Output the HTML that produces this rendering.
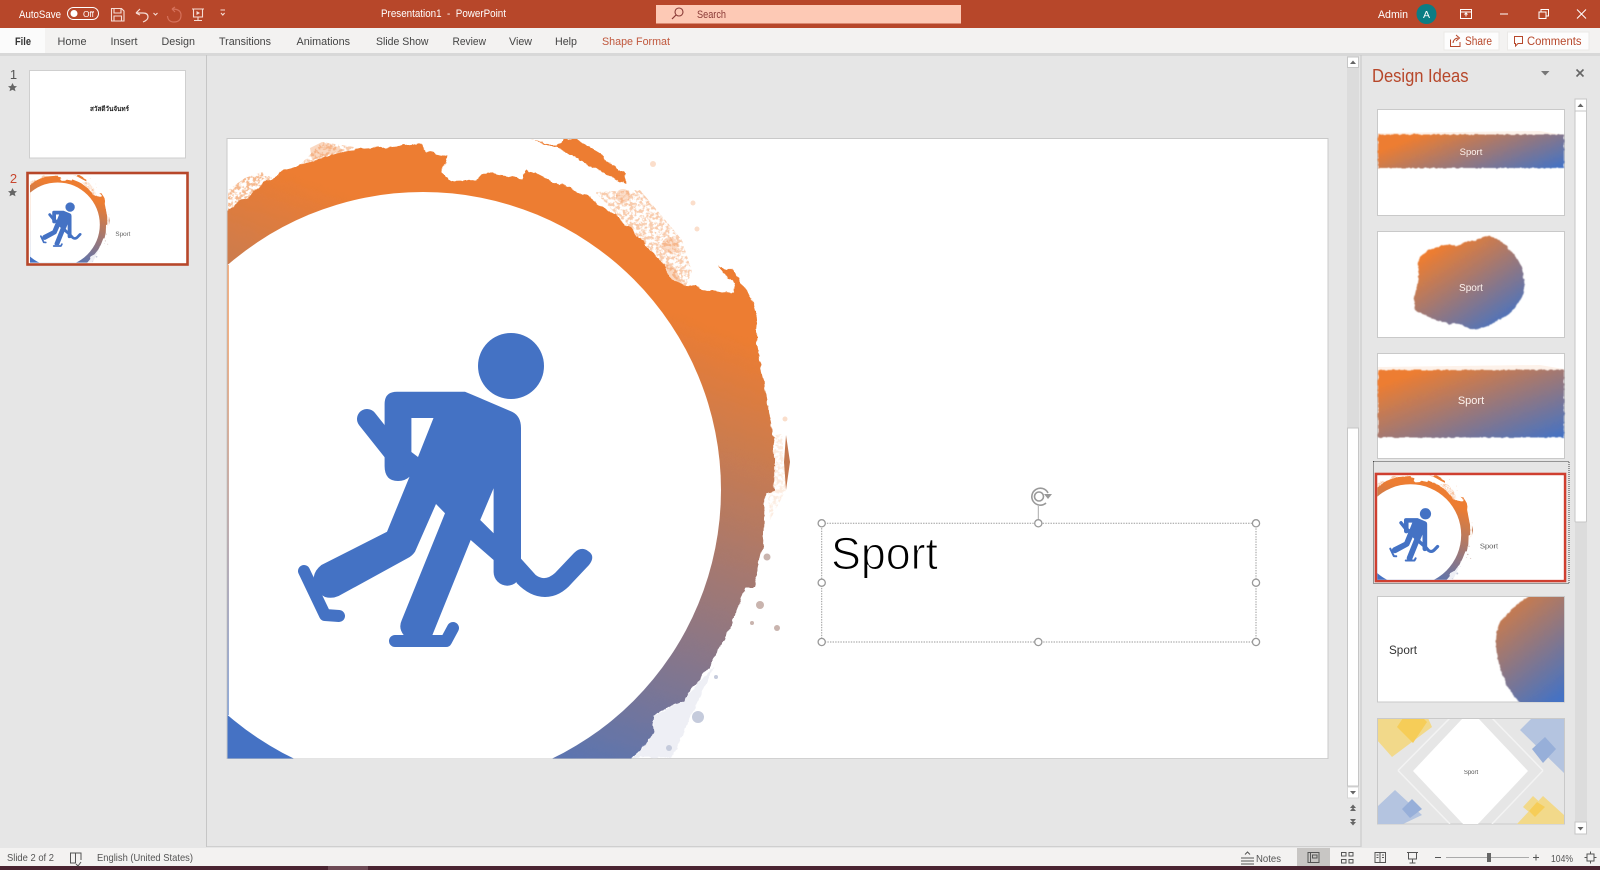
<!DOCTYPE html>
<html><head><meta charset="utf-8"><title>PowerPoint</title>
<style>
html,body{margin:0;padding:0;background:#e6e6e6;overflow:hidden}
svg{display:block}
text{font-family:"Liberation Sans","DejaVu Sans","Noto Sans CJK SC",sans-serif}
</style></head><body>
<svg width="1600" height="870" viewBox="0 0 1600 870" xmlns="http://www.w3.org/2000/svg">
<defs>
<linearGradient id="ringG" gradientUnits="userSpaceOnUse" x1="560" y1="270" x2="380" y2="770">
<stop offset="0" stop-color="#ed7d31"/><stop offset="1" stop-color="#4472c4"/></linearGradient>
<linearGradient id="bandG" x1=".1" y1=".1" x2=".8" y2="1"><stop offset=".08" stop-color="#ed7d31"/><stop offset="1" stop-color="#4472c4"/></linearGradient>
<linearGradient id="band1U" gradientUnits="userSpaceOnUse" x1="1420" y1="135" x2="1450" y2="211"><stop offset="0" stop-color="#ed7d31"/><stop offset="1" stop-color="#4472c4"/></linearGradient>
<linearGradient id="band3U" gradientUnits="userSpaceOnUse" x1="1420" y1="370" x2="1460" y2="476"><stop offset="0" stop-color="#ed7d31"/><stop offset="1" stop-color="#4472c4"/></linearGradient>
<linearGradient id="blob5G" x1=".2" y1="0" x2=".7" y2="1"><stop offset="0" stop-color="#d97c3f"/><stop offset="1" stop-color="#4472c4"/></linearGradient>
<linearGradient id="leftG" x1="0" y1="0" x2="0" y2="1"><stop offset=".15" stop-color="#ed7d31"/><stop offset="1" stop-color="#4472c4"/></linearGradient>
<clipPath id="slideClip"><rect x="227.6" y="139" width="1100" height="619.3"/></clipPath>
<clipPath id="t5"><rect x="1378" y="597" width="186" height="105"/></clipPath>
<clipPath id="t6"><rect x="1378" y="719" width="186" height="105"/></clipPath>
<filter id="rough" x="-5%" y="-5%" width="110%" height="110%"><feTurbulence type="fractalNoise" baseFrequency=".15" numOctaves="3" seed="4"/><feDisplacementMap in="SourceGraphic" scale="4" xChannelSelector="R" yChannelSelector="G"/></filter>
<filter id="roughS" x="-5%" y="-15%" width="110%" height="130%"><feTurbulence type="fractalNoise" baseFrequency=".25" numOctaves="2" seed="7"/><feDisplacementMap in="SourceGraphic" scale="2.5" xChannelSelector="R" yChannelSelector="G"/><feGaussianBlur stdDeviation=".4"/></filter>
<filter id="ringF" x="-3%" y="-3%" width="106%" height="106%"><feTurbulence type="fractalNoise" baseFrequency=".09" numOctaves="4" seed="3"/><feDisplacementMap in="SourceGraphic" scale="6" xChannelSelector="R" yChannelSelector="G"/></filter>
<filter id="speck" x="-5%" y="-5%" width="110%" height="110%"><feTurbulence type="fractalNoise" baseFrequency=".3" numOctaves="3" seed="11" result="n"/><feColorMatrix in="n" type="matrix" values="0 0 0 0 0  0 0 0 0 0  0 0 0 0 0  5 0 0 0 -2.1" result="m"/><feComposite in="SourceGraphic" in2="m" operator="in"/></filter>
<g id="scene">
<g clip-path="url(#slideClip)">
<rect x="227.6" y="139" width="1100" height="619.3" fill="#fff"/>
<g filter="url(#speck)">
<path fill="#ed7d31" opacity=".4" d="M300,165 L322,142 L354,147 L346,158 L300,172Z M595,192 L640,190 L682,240 L692,272 L684,290 L664,265 L633,232Z"/>
<path fill="#ed7d31" opacity=".55" d="M228,190 L245,178 L262,172 L272,178 L240,205 L228,214Z"/>
<path fill="#ed7d31" opacity=".15" d="M775,435 L782,434 L786,490 L770,520 L768,494Z"/>
</g>
<path fill="#ed7d31" opacity=".3" d="M310,148 L322,142 L345,150 L312,160Z M664,263 L676,270 L684,287 L668,282Z"/>
<path fill="#eeeff5" filter="url(#rough)" d="M714,667 L695,707 L672,757 L633,758 L654,733 L652,717 L683,700Z"/>
<path fill="url(#ringG)" filter="url(#ringF)" d="M205,230 L227.6,212 L262,184 L277,175 L300,165 L346,150 L423,144 L427,152 L446,156 L442,173 L452,181 L476,180 L488,172 L522,179 L526,170 L570,188 L591,198 L612,214 L633,230 L650,250 L664,263 L672,280 L685,285 L721,293 L733,292 L735,283 L717,266 L733,270 L745,288 L754,303 L757.7,323 L756,343 L763,380 L767,400 L773,430 L774,490 L765,493 L763,547 L754,587 L746,587 L729,630 L710,667 L683,700 L652,717 L654,733 L633,758 L618,780 L205,780Z"/>
<path fill="#ed7d31" filter="url(#rough)" d="M530,139 L557,146 L561,143 L564,139 L576,139 L603,155 L606.5,162 L625.7,173 L625.7,184 L603,173 L576,158 L557,148Z"/>
<path fill="#c4784f" d="M786,435 L790,462 L786,490 L784,462Z"/>
<ellipse cx="423" cy="490" rx="298" ry="298" fill="#fff"/>
<rect x="227.6" y="265" width="1" height="450" fill="url(#leftG)"/>
<g fill="#ed7d31" opacity=".25"><circle cx="653" cy="164" r="3"/><circle cx="693" cy="203" r="2.5"/><circle cx="697" cy="229" r="2.5"/><circle cx="623" cy="196" r="7"/><circle cx="670" cy="245" r="8"/><circle cx="785" cy="419" r="2.5"/></g>
<g fill="#c9b4ae"><circle cx="760" cy="605" r="4"/><circle cx="752" cy="623" r="2"/><circle cx="777" cy="628" r="3"/><circle cx="767" cy="557" r="3.5"/></g>
<g fill="#c5cbdc"><circle cx="698" cy="717" r="6"/><circle cx="716" cy="677" r="2"/><circle cx="669" cy="748" r="3"/></g>
<g fill="#4472c4">
<circle cx="511" cy="366" r="33"/>
<path d="M384.6,404 Q384.6,391.7 397,391.7 L465,391.7 L512,411.7 Q521,416 521,428 L521,572 A13.7,13.7 0 0 1 493.6,572 L493.6,560 L470.7,540 L432.4,635 L403.7,635 Q398,628 401.8,620 L445,513.3 L436,504 L415,551.7 Q412,556 407.5,558.3 L338.6,596 Q332,599 325,597 Q312,590 313.8,576.7 Q315,570 321.4,565 L387,531.7 L409.5,476.7 Q405,481 398,481 Q384.6,481 384.6,466Z"/>
<path d="M516.6,583 Q530,597 545,597 Q560,597 572,583 L589,565 Q596,556 588,551 Q581,546 574,553 L555,573 Q545,582 535.7,575 L515,552Z"/>
<path d="M367,419 L398,458" stroke="#4472c4" stroke-width="20" stroke-linecap="round"/>
<path d="M304,571 L325,615 L339,616" fill="none" stroke="#4472c4" stroke-width="12" stroke-linecap="round" stroke-linejoin="round"/>
<path d="M395,641 L446,641 L453,628" fill="none" stroke="#4472c4" stroke-width="12" stroke-linecap="round" stroke-linejoin="round"/>
</g>
<path fill="#fff" d="M411.4,418 L433.5,418 L418,457 L411.4,452Z M493.6,488.3 L480.2,520 L493.6,533.3Z"/>
</g>
<text x="831" y="569" font-size="45" fill="#000" stroke="#fff" stroke-width="1.1" textLength="107" lengthAdjust="spacingAndGlyphs">Sport</text>
</g>
</defs>

<!-- backgrounds -->
<rect width="1600" height="870" fill="#e6e6e6"/>
<rect x="0" y="0" width="1600" height="28" fill="#b7472a"/>
<rect x="0" y="53" width="1600" height="3" fill="#d8d8d8"/>
<rect x="0" y="28" width="1600" height="25" fill="#f3f2f1"/>
<rect x="0" y="28" width="45" height="25" fill="#fbfbfb"/>

<!-- title bar left -->
<g fill="#fff" font-size="11">
<text x="19" y="18" textLength="42" lengthAdjust="spacingAndGlyphs">AutoSave</text>
<rect x="67.5" y="7.5" width="31" height="12" rx="6" fill="none" stroke="#fff"/>
<circle cx="74" cy="13.5" r="3.5"/>
<text x="83" y="17" font-size="8.5" textLength="11" lengthAdjust="spacingAndGlyphs">Off</text>
<text x="381" y="17" textLength="125" lengthAdjust="spacingAndGlyphs" xml:space="preserve">Presentation1  -  PowerPoint</text>
</g>
<g fill="none" stroke="#f6ddd5" stroke-width="1.1">
<path d="M111.5,8.5 H121.5 L124,11 V21 H111.5Z M114,8.5 V13 H121 V8.5 M114,21 V16 H121.5 V21"/>
<path d="M136,13 L140,9 M136,13 L140,15 M136.5,13 H143 Q148,13 148,17 Q148,20 143,22" stroke-width="1.2"/>
<path d="M153.5,13 L155.5,15 L157.5,13"/>
<path d="M192,9 H204 M193.5,9 V17 H202.5 V9 M198,17 V20.5 M194,20.5 H202"/>
<path d="M220.5,10 H225 M221,13 L222.8,15 L224.6,13"/>
</g>
<path d="M196.5,11 L200,13 L196.5,15Z" fill="#f6ddd5"/>
<path d="M172,9 Q181,9 181,15 Q181,22 174,22 Q168,22 167.5,16 M172,9 L175,12 M172,9 L175,7" fill="none" stroke="#d5705a" stroke-width="1.2"/>

<!-- search -->
<rect x="656" y="5" width="305" height="18.5" fill="#fdc9b5"/>
<circle cx="679" cy="12" r="4" fill="none" stroke="#8a3a36" stroke-width="1.1"/>
<path d="M676,15 L672,19" stroke="#8a3a36" stroke-width="1.2"/>
<text x="697" y="18" font-size="11" fill="#8a3a36" textLength="29" lengthAdjust="spacingAndGlyphs">Search</text>

<!-- title bar right -->
<text x="1378" y="18" font-size="11" fill="#fff" textLength="30" lengthAdjust="spacingAndGlyphs">Admin</text>
<circle cx="1426.5" cy="14" r="10" fill="#0b7d84"/>
<text x="1426.5" y="18" font-size="10.5" fill="#fff" text-anchor="middle">A</text>
<g fill="none" stroke="#fff" stroke-width="1">
<path d="M1460.5,9.5 H1471.5 V18.5 H1460.5Z M1460.5,12 H1471.5 M1466,13.5 V16.5 M1464.5,14.5 L1466,13 L1467.5,14.5"/>
<path d="M1500,14 H1508"/>
<path d="M1539,12 H1546 V18.5 H1539Z M1541,12 V9.5 H1548.5 V16 H1546"/>
<path d="M1577,9.5 L1586,18.5 M1586,9.5 L1577,18.5"/>
</g>

<!-- tabs -->
<g font-size="11" fill="#444">
<text x="15" y="45" font-weight="bold" fill="#333" textLength="16" lengthAdjust="spacingAndGlyphs">File</text>
<text x="57.5" y="45" textLength="29" lengthAdjust="spacingAndGlyphs">Home</text>
<text x="110.5" y="45" textLength="27" lengthAdjust="spacingAndGlyphs">Insert</text>
<text x="161.5" y="45" textLength="33.5" lengthAdjust="spacingAndGlyphs">Design</text>
<text x="219" y="45" textLength="52" lengthAdjust="spacingAndGlyphs">Transitions</text>
<text x="296.5" y="45" textLength="53.5" lengthAdjust="spacingAndGlyphs">Animations</text>
<text x="376" y="45" textLength="52.5" lengthAdjust="spacingAndGlyphs">Slide Show</text>
<text x="452.5" y="45" textLength="33.5" lengthAdjust="spacingAndGlyphs">Review</text>
<text x="509" y="45" textLength="23" lengthAdjust="spacingAndGlyphs">View</text>
<text x="555" y="45" textLength="22" lengthAdjust="spacingAndGlyphs">Help</text>
<text x="602" y="45" fill="#c0573c" textLength="68" lengthAdjust="spacingAndGlyphs">Shape Format</text>
</g>
<!-- share/comments -->
<rect x="1444" y="32" width="55" height="18" fill="#fdfdfd" stroke="#ebe9e7"/>
<rect x="1507.5" y="32" width="81.5" height="18" fill="#fdfdfd" stroke="#ebe9e7"/>
<path d="M1450.5,39.5 L1450.5,46.5 H1460 V42 M1453,43 Q1453.5,38.5 1458,38 M1456,35 L1459.5,38 L1456,41" fill="none" stroke="#b7472a"/>
<text x="1465" y="45" font-size="11.5" fill="#b7472a" textLength="27" lengthAdjust="spacingAndGlyphs">Share</text>
<path d="M1514.5,36.5 H1522.5 V43.5 H1518 L1515.5,46 V43.5 H1514.5Z" fill="none" stroke="#b7472a"/>
<text x="1527" y="45" font-size="11.5" fill="#b7472a" textLength="54.5" lengthAdjust="spacingAndGlyphs">Comments</text>

<!-- dividers -->
<rect x="206" y="55" width="1" height="792" fill="#c6c6c6"/>
<rect x="1360.5" y="55" width="1" height="792" fill="#c6c6c6"/>
<rect x="207" y="846" width="1154" height="1" fill="#cfcfcf"/>

<!-- left pane -->
<text x="13.5" y="79" font-size="13" fill="#555" text-anchor="middle">1</text>
<path d="M12.5,83 L14,86 L17,86.3 L14.7,88.3 L15.5,91.3 L12.5,89.7 L9.5,91.3 L10.3,88.3 L8,86.3 L11,86Z" fill="#666"/>
<text x="13.5" y="183" font-size="13" fill="#c8462e" text-anchor="middle">2</text>
<path d="M12.5,188 L14,191 L17,191.3 L14.7,193.3 L15.5,196.3 L12.5,194.7 L9.5,196.3 L10.3,193.3 L8,191.3 L11,191Z" fill="#666"/>
<rect x="29.5" y="70.5" width="156" height="87.5" fill="#fff" stroke="#cfcfcf"/>
<text x="90" y="111" font-size="6.5" font-weight="bold" fill="#222" textLength="39" lengthAdjust="spacingAndGlyphs">สวัสดีวันจันทร์</text>
<rect x="27.5" y="173" width="160" height="91.5" fill="#fff" stroke="#b7472a" stroke-width="2.6"/>
<use href="#scene" transform="translate(-2.2,155.3) scale(.1415)"/>

<!-- main slide -->
<rect x="227" y="138.5" width="1101" height="620" fill="#fff" stroke="#c9c9c9"/>
<use href="#scene"/>

<!-- selection -->
<rect x="821.7" y="523.3" width="434.3" height="118.7" fill="none" stroke="#9a9a9a" stroke-dasharray="1.4 1.2"/>
<path d="M1038.3,506 V520" stroke="#aaa" stroke-width="1"/>
<g fill="#fff" stroke="#999" stroke-width="1.3">
<circle cx="821.7" cy="523.3" r="3.6"/><circle cx="1038.3" cy="523.3" r="3.6"/><circle cx="1256" cy="523.3" r="3.6"/>
<circle cx="821.7" cy="582.7" r="3.6"/><circle cx="1256" cy="582.7" r="3.6"/>
<circle cx="821.7" cy="642" r="3.6"/><circle cx="1038.3" cy="642" r="3.6"/><circle cx="1256" cy="642" r="3.6"/>
</g>
<g fill="none" stroke="#999" stroke-width="1.6">
<path d="M1048,493 A8.5,8.5 0 1 0 1046,503"/><circle cx="1039" cy="496.5" r="4.5"/>
</g>
<path d="M1044,494 L1052,494 L1048,499Z" fill="#999"/>

<!-- main scrollbar -->
<rect x="1347" y="56" width="12" height="742" fill="#dcdcdc"/>
<rect x="1347.5" y="57" width="11" height="10.5" fill="#fff" stroke="#c6c6c6"/>
<rect x="1347.5" y="428" width="11" height="358" fill="#fff" stroke="#c6c6c6"/>
<rect x="1347.5" y="787" width="11" height="11" fill="#fff" stroke="#d6d6d6"/>
<g fill="#666">
<path d="M1350,64 L1353,60.5 L1356,64Z"/><path d="M1350,791 L1353,794.5 L1356,791Z"/>
<path d="M1350,808 L1353,804.5 L1356,808Z M1350,811 L1353,807.5 L1356,811Z"/>
<path d="M1350,819 L1353,822.5 L1356,819Z M1350,822 L1353,825.5 L1356,822Z"/>
</g>

<!-- design ideas -->
<text x="1372" y="82" font-size="18" fill="#b7472a" textLength="96.5" lengthAdjust="spacingAndGlyphs">Design Ideas</text>
<path d="M1541,71 H1549.5 L1545.2,75.5Z" fill="#777"/>
<path d="M1576.5,69.5 L1583.5,76.5 M1583.5,69.5 L1576.5,76.5" stroke="#666" stroke-width="1.6"/>

<rect x="1575" y="100" width="12" height="734" fill="#dcdcdc"/>
<rect x="1575" y="99" width="11.5" height="12" fill="#fff" stroke="#c6c6c6"/>
<rect x="1575" y="111" width="11.5" height="411" rx="1" fill="#fff" stroke="#c6c6c6"/>
<rect x="1575" y="822" width="11.5" height="12" fill="#fff" stroke="#c6c6c6"/>
<path d="M1577.5,107 L1580.5,103.5 L1583.5,107Z M1577.5,827 L1580.5,830.5 L1583.5,827Z" fill="#666"/>

<!-- thumb 1 -->
<rect x="1377.5" y="109.5" width="187" height="106" fill="#fff" stroke="#c9c9c9"/>
<path d="M1378,137 L1378,133 L1540,131 L1564,135 L1564,137Z" fill="#ed7d31" opacity=".1"/>
<rect x="1378" y="134.5" width="186" height="33.5" fill="url(#band1U)" filter="url(#roughS)"/>
<text x="1471" y="155" font-size="9.5" fill="#fdf3ee" text-anchor="middle">Sport</text>

<!-- thumb 2 -->
<rect x="1377.5" y="231.5" width="187" height="106" fill="#fff" stroke="#c9c9c9"/>
<path fill="url(#bandG)" filter="url(#roughS)" d="M1418,262 Q1422,250 1438,247 Q1448,243 1456,246 Q1470,240 1476,241 Q1484,234 1494,237 Q1505,244 1510,250 Q1522,262 1523,275 Q1527,290 1520,300 Q1512,315 1500,319 Q1485,330 1470,329 Q1460,322 1450,324 Q1432,320 1415,310 Q1413,300 1416,290 Q1420,275 1418,262Z"/>
<text x="1471" y="291" font-size="10" fill="#fdf3ee" text-anchor="middle">Sport</text>

<!-- thumb 3 -->
<rect x="1377.5" y="353.5" width="187" height="105" fill="#fff" stroke="#c9c9c9"/>
<path d="M1378,372 L1378,367 L1540,365 L1564,369 L1564,372Z" fill="#ed7d31" opacity=".1"/>
<rect x="1378" y="370" width="186" height="67.5" fill="url(#band3U)" filter="url(#roughS)"/>
<text x="1471" y="404" font-size="11" fill="#fdf3ee" text-anchor="middle">Sport</text>

<!-- thumb 4 selected -->
<rect x="1373.5" y="461.5" width="195.5" height="122" fill="none" stroke="#444" stroke-dasharray="1 1"/>
<rect x="1376" y="474" width="189" height="107" fill="#fff" stroke="#cf3f30" stroke-width="2.6"/>
<svg x="1377.3" y="475.2" width="186.4" height="104.6" viewBox="227.6 139 1096.5 615.3" preserveAspectRatio="none"><use href="#scene"/></svg>

<!-- thumb 5 -->
<rect x="1377.5" y="596.5" width="187" height="105.5" fill="#fff" stroke="#c9c9c9"/>
<g clip-path="url(#t5)">
<path fill="url(#blob5G)" filter="url(#roughS)" d="M1500,622 Q1515,604 1532,594 L1570,590 L1570,708 L1525,708 Q1504,690 1497,655 Q1494,635 1500,622Z"/>
</g>
<text x="1389" y="654" font-size="11.5" fill="#333" textLength="28" lengthAdjust="spacingAndGlyphs">Sport</text>

<!-- thumb 6 -->
<rect x="1377.5" y="718.5" width="187" height="105.5" fill="#e6e6e6" stroke="#c9c9c9"/>
<g clip-path="url(#t6)">
<path d="M1398,770.5 L1450,718 M1398,770.5 L1450,824 M1543,770.5 L1492,718 M1543,770.5 L1492,824" stroke="#f3f3f3" stroke-width="1.5" fill="none"/>
<path d="M1463,718 L1478,718 L1528,771 L1478,824 L1463,824 L1413,771Z" fill="#fff"/>
<path d="M1377,718 L1428,718 L1432,727 L1392,757 L1377,740Z" fill="#f2d98a"/>
<path d="M1403,718 L1423,718 L1427,722 L1413,743 L1397,727Z" fill="#f6cd58"/>
<path d="M1520,730 L1532,718 L1564,718 L1564,773Z" fill="#b4c4e0"/>
<path d="M1545,737 L1556,749 L1543,763 L1532,749Z" fill="#97afd9"/>
<path d="M1395,790 L1422,815 L1403,824 L1377,824 L1377,807Z" fill="#b4c4e0"/>
<path d="M1412,799 L1422,809 L1410,818 L1402,809Z" fill="#97afd9"/>
<path d="M1543,796 L1564,815 L1564,824 L1517,824Z" fill="#f2d98a"/>
<path d="M1533,796 L1523,807 L1535,817 L1545,807Z" fill="#f2d98a"/>
<path d="M1537,802 L1545,807 L1535,817 L1529,811Z" fill="#f6cd58"/>
</g>
<text x="1471" y="774" font-size="6" fill="#555" text-anchor="middle">Sport</text>

<!-- status bar -->
<rect x="0" y="848" width="1600" height="18" fill="#f3f2f1"/>
<rect x="0" y="866" width="1600" height="4" fill="#4a2431"/>
<rect x="328" y="866" width="40" height="4" fill="#6d4a55"/>
<g font-size="10.5" fill="#555">
<text x="7" y="861" textLength="47" lengthAdjust="spacingAndGlyphs">Slide 2 of 2</text>
<text x="97" y="861" textLength="96" lengthAdjust="spacingAndGlyphs">English (United States)</text>
<text x="1256" y="862" textLength="25" lengthAdjust="spacingAndGlyphs">Notes</text>
<text x="1551" y="862" textLength="22" lengthAdjust="spacingAndGlyphs">104%</text>
</g>
<g fill="none" stroke="#555" stroke-width="1">
<path d="M70.5,853 H75.5 V863 H70.5Z M75.5,853 H81 V860 M76,864 L78,866 L81,862"/>
<path d="M1241,858 H1254 M1241,861 H1254 M1241,864 H1254 M1245,854.5 L1247.5,852 L1250,854.5"/>
</g>
<rect x="1297" y="848" width="33" height="18" fill="#c8c6c4"/>
<g fill="none" stroke="#555" stroke-width="1">
<path d="M1308,852.5 H1319 V862.5 H1308Z M1310.5,852.5 V862.5 M1312.5,855 H1317 V858 H1312.5Z"/>
<path d="M1341.5,852.5 H1346 V856 H1341.5Z M1349,852.5 H1353 V856 H1349Z M1341.5,859.5 H1346 V863 H1341.5Z M1349,859.5 H1353 V863 H1349Z"/>
<path d="M1375,852.5 H1385.5 V862.5 H1375Z M1380,852.5 V862.5 M1376.5,855 H1378.5 M1376.5,857.5 H1378.5 M1382,855 H1384 M1382,857.5 H1384"/>
<path d="M1407,852.5 H1418 M1408.5,852.5 V859 H1416.5 V852.5 M1412.5,859 V863 M1409.5,863 H1415.5"/>
<path d="M1435,857.5 H1441 M1533,857.5 H1539 M1536,854.5 V860.5"/>
<path d="M1590.5,851.5 V854 M1590.5,861 V863.5 M1584.5,857.5 H1587 M1594,857.5 H1596.5"/>
<path d="M1587,854 H1594 V861 H1587Z"/>
</g>
<rect x="1446" y="857" width="83" height="1" fill="#aaa"/>
<rect x="1487" y="853" width="4" height="9" fill="#666"/>
</svg>
</body></html>
